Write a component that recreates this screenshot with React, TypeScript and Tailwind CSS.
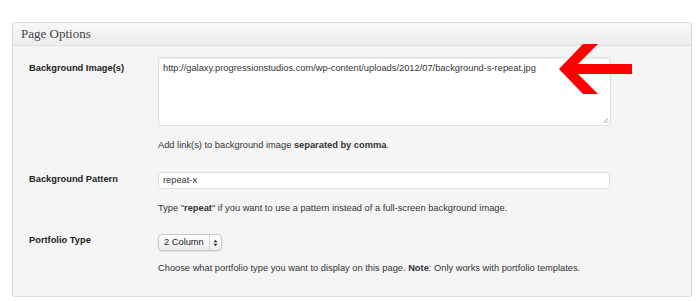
import React from "react";

export default function App() {
  const sans = { fontFamily: '"Liberation Sans", Arial, sans-serif' };
  return (
    <div className="relative w-[700px] h-[301px] bg-white overflow-hidden" style={sans}>
      <div className="pt-[22px] pl-[12px]">
        <div className="w-[680px] h-[275px] border border-[#dcdcdc] rounded-[3px] bg-[#f5f5f5] overflow-hidden">
          <div className="h-[23px] border-b border-[#dfdfdf] bg-gradient-to-b from-[#f9f9f9] to-[#ececec] pl-[8px] flex items-center">
            <span className="text-[13px] text-[#464646]" style={{ fontFamily: '"Liberation Serif", Georgia, serif' }}>
              Page Options
            </span>
          </div>
          <div className="pl-[16px] pt-[11px] text-[9.3px] text-[#333]">
            {/* Row 1 */}
            <div className="flex">
              <div className="w-[129px] pt-[5px] font-bold text-[#222]">Background Image(s)</div>
              <div>
                <div className="relative w-[453px] h-[69px] bg-white border border-[#dfdfdf] rounded-[3px] shadow-[inset_0_1px_2px_rgba(0,0,0,0.07)] px-[4px] pt-[4px] text-[#333]">
                  http://galaxy.progressionstudios.com/wp-content/uploads/2012/07/background-s-repeat.jpg
                  <svg className="absolute right-[1px] bottom-[1px]" width="7" height="7" viewBox="0 0 7 7">
                    <path d="M6 1 L1 6 M6 3.5 L3.5 6 M6 5.5 L5.5 6" stroke="#999" strokeWidth="0.8" />
                  </svg>
                </div>
                <div className="mt-[13px] leading-[12px]">
                  Add link(s) to background image <b>separated by comma</b>.
                </div>
              </div>
            </div>
            {/* Row 2 */}
            <div className="flex mt-[21px]">
              <div className="w-[129px] pt-[1px] font-bold text-[#222]">Background Pattern</div>
              <div>
                <div className="w-[452px] h-[17px] bg-white border border-[#dfdfdf] rounded-[3px] px-[4px] flex items-center text-[#333]">
                  repeat-x
                </div>
                <div className="mt-[13px] leading-[12px]">
                  Type "<b>repeat</b>" if you want to use a pattern instead of a full-screen background image.
                </div>
              </div>
            </div>
            {/* Row 3 */}
            <div className="flex mt-[20px]">
              <div className="w-[129px] pt-[0px] font-bold text-[#222]">Portfolio Type</div>
              <div>
                <div className="w-[64px] h-[17px] border border-[#c8c8c8] rounded-[4px] bg-gradient-to-b from-[#ffffff] to-[#ececec] shadow-[0_1px_1px_rgba(0,0,0,0.08)] flex items-center text-[#222]">
                  <span className="pl-[5px] flex-1">2 Column</span>
                  <span className="w-[12px] h-full border-l border-[#d4d4d4] flex items-center justify-center">
                    <svg width="5" height="8" viewBox="0 0 5 8">
                      <path d="M0.5 3.2 L2.5 0.8 L4.5 3.2 Z M0.5 4.8 L2.5 7.2 L4.5 4.8 Z" fill="#333" />
                    </svg>
                  </span>
                </div>
                <div className="mt-[11px] leading-[12px]">
                  Choose what portfolio type you want to display on this page. <b>Note</b>: Only works with portfolio templates.
                </div>
              </div>
            </div>
          </div>
        </div>
      </div>
      <svg className="absolute left-[555px] top-[40px]" width="80" height="58" viewBox="555 40 80 58">
        <polygon points="559,69 583,44 598,44 578,64 632,64 632,74 578,74 598,94 583,94" fill="#ff0000" />
      </svg>
    </div>
  );
}
